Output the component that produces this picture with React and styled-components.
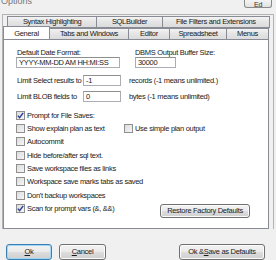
import styled, { createGlobalStyle } from "styled-components";

const GlobalStyle = createGlobalStyle`
  html, body {
    margin: 0;
    padding: 0;
    background: #f0f0f0;
  }
  body {
    font-family: "Liberation Sans", Arial, sans-serif;
    font-size: 7.5px;
    letter-spacing: -0.3px;
    color: #1a1a1a;
  }
`;

const Window = styled.div`
  width: 276px;
  height: 260px;
  overflow: hidden;
  display: flex;
  flex-direction: column;
  background: #f0f0f0;
`;

const TitleBar = styled.div`
  height: 14px;
  display: flex;
  align-items: flex-start;
  justify-content: space-between;
  padding: 0 4px 0 1px;
  box-sizing: border-box;
`;

const Title = styled.span`
  font-size: 9px;
  line-height: 9px;
  margin-top: -3px;
  letter-spacing: 0;
  color: #777;
`;

const CornerButton = styled.div`
  width: 26px;
  height: 8px;
  margin-top: -1px;
  border: 1px solid #8a8a8a;
  border-top: none;
  border-radius: 0 0 3px 3px;
  background: linear-gradient(#f6f6f6, #e2e2e2);
  display: flex;
  justify-content: center;
  align-items: flex-end;
  font-size: 7px;
  line-height: 5px;
  color: #333;
  overflow: hidden;
`;

const Frame = styled.div`
  margin: 0 2px;
  height: 223px;
  border: 1px solid #b4b4b4;
  border-bottom: none;
  box-sizing: border-box;
  padding: 1px 4px 0 0;
  display: flex;
  flex-direction: column;
`;

const TabRow = styled.div`
  display: flex;
  height: 12px;
  padding-left: ${(p) => p.$indent}px;
  position: relative;
  z-index: ${(p) => (p.$front ? 2 : 1)};
`;

const Tab = styled.div`
  width: ${(p) => p.$w}px;
  height: ${(p) => (p.$active ? 15 : 12)}px;
  margin-top: ${(p) => (p.$active ? -2 : 0)}px;
  box-sizing: border-box;
  border: 1px solid #898c95;
  border-bottom: ${(p) => (p.$active ? "none" : "1px solid #898c95")};
  margin-right: -1px;
  background: ${(p) =>
    p.$active ? "#fff" : "linear-gradient(#f3f3f3, #e4e4e4 50%, #dcdcdc)"};
  display: flex;
  align-items: ${(p) => (p.$active ? "flex-start" : "center")};
  padding-top: ${(p) => (p.$active ? 2 : 0)}px;
  justify-content: center;
  line-height: 9px;
  white-space: nowrap;
  position: relative;
  z-index: ${(p) => (p.$active ? 3 : 1)};
`;

const Page = styled.div`
  flex: 1;
  margin-top: -1px;
  border: 1px solid #898c95;
  background: #fff;
  padding: 8px 0 0 12px;
  box-sizing: border-box;
  position: relative;
  z-index: 2;
  max-height: 197px;
`;

const LabelRow = styled.div`
  display: flex;
  height: 9px;
  line-height: 9px;
`;

const Col = styled.div`
  width: ${(p) => p.$w}px;
  flex: none;
  padding-left: ${(p) => p.$pad || 0}px;
  box-sizing: border-box;
  white-space: nowrap;
`;

const InputRow = styled.div`
  display: flex;
  align-items: center;
  height: 11px;
  margin-top: ${(p) => p.$mt}px;
`;

const Field = styled.div`
  width: ${(p) => p.$w}px;
  height: 11px;
  flex: none;
  box-sizing: border-box;
  border: 1px solid #abadb3;
  border-top-color: #8e8f8f;
  background: #fff;
  padding-left: 2px;
  line-height: 9px;
  white-space: nowrap;
  overflow: hidden;
`;

const Label = styled.span`
  width: ${(p) => p.$w}px;
  flex: none;
  padding-left: 1px;
  white-space: nowrap;
`;

const Hint = styled.span`
  margin-left: 8px;
  white-space: nowrap;
`;

const Checks = styled.div`
  margin-top: 7px;
  display: flex;
  flex-direction: column;
`;

const CheckRow = styled.div`
  display: flex;
  align-items: flex-start;
  height: 13.35px;
`;

const CheckItem = styled.label`
  display: flex;
  align-items: center;
  width: ${(p) => (p.$w ? `${p.$w}px` : "auto")};
  flex: none;
  height: 13px;
  white-space: nowrap;
`;

const Box = styled.span`
  width: 9px;
  height: 9px;
  box-sizing: border-box;
  border: 1px solid #8f8f8f;
  background: linear-gradient(135deg, #dcdcdc, #f6f6f6);
  margin-right: 2px;
  display: flex;
  align-items: center;
  justify-content: center;
  flex: none;
`;

const Button = styled.div`
  width: ${(p) => p.$w}px;
  height: ${(p) => p.$h || 14}px;
  flex: none;
  box-sizing: border-box;
  border: 1px solid ${(p) => (p.$default ? "#3c7fb1" : "#707070")};
  box-shadow: ${(p) => (p.$default ? "inset 0 0 0 1px #9ed6f6" : "inset 0 0 0 1px #fbfbfb")};
  border-radius: 3px;
  background: linear-gradient(#f2f2f2, #ebebeb 48%, #dddddd 52%, #cfcfcf);
  display: flex;
  align-items: center;
  justify-content: center;
  white-space: nowrap;
  line-height: 10px;
`;

const RestoreButton = styled(Button)`
  margin-left: auto;
  margin-right: 18px;
  margin-top: 2px;
`;

const ButtonBar = styled.div`
  display: flex;
  padding: 15px 0 0 6px;
  gap: 7px;
`;

const Spacer = styled.div`
  flex: 1;
`;

const U = styled.span`
  text-decoration: underline;
`;

function Check({ checked, children, w }) {
  return (
    <CheckItem $w={w}>
      <Box>
        {checked && (
          <svg width="7" height="7" viewBox="0 0 7 7">
            <path d="M0.8 3.6 L2.6 5.6 L6.2 0.8" fill="none" stroke="#2a3d8f" strokeWidth="1.4" />
          </svg>
        )}
      </Box>
      {children}
    </CheckItem>
  );
}

const backTabs = [
  { name: "Syntax Highlighting", w: 91 },
  { name: "SQLBuilder", w: 67 },
  { name: "File Filters and Extensions", w: 109 },
];

const frontTabs = [
  { name: "General", w: 47, active: true },
  { name: "Tabs and Windows", w: 80 },
  { name: "Editor", w: 42 },
  { name: "Spreadsheet", w: 58 },
  { name: "Menus", w: 43 },
];

export default function App() {
  return (
    <>
      <GlobalStyle />
      <Window>
        <TitleBar>
          <Title>Options</Title>
          <CornerButton>Ed</CornerButton>
        </TitleBar>
        <Frame>
          <TabRow $indent={4}>
            {backTabs.map((t) => (
              <Tab key={t.name} $w={t.w}>
                {t.name}
              </Tab>
            ))}
          </TabRow>
          <TabRow $indent={0} $front>
            {frontTabs.map((t) => (
              <Tab key={t.name} $w={t.w} $active={t.active}>
                {t.name}
              </Tab>
            ))}
          </TabRow>
          <Page>
            <LabelRow>
              <Col $w={119} $pad={1}>Default Date Format:</Col>
              <Col $w={100}>DBMS Output Buffer Size:</Col>
            </LabelRow>
            <InputRow $mt={0}>
              <Field $w={104}>YYYY-MM-DD AM HH:MI:SS</Field>
              <Field $w={41} style={{ marginLeft: 15 }}>30000</Field>
            </InputRow>
            <InputRow $mt={7}>
              <Label $w={66}>Limit Select results to</Label>
              <Field $w={38}>-1</Field>
              <Hint>records (-1 means unlimited.)</Hint>
            </InputRow>
            <InputRow $mt={5}>
              <Label $w={66}>Limit BLOB fields to</Label>
              <Field $w={38}>0</Field>
              <Hint>bytes (-1 means unlimited)</Hint>
            </InputRow>
            <Checks>
              <CheckRow>
                <Check checked>Prompt for File Saves:</Check>
              </CheckRow>
              <CheckRow>
                <Check w={108}>Show explain plan as text</Check>
                <Check>Use simple plan output</Check>
              </CheckRow>
              <CheckRow>
                <Check>Autocommit</Check>
              </CheckRow>
              <CheckRow>
                <Check>Hide before/after sql text.</Check>
              </CheckRow>
              <CheckRow>
                <Check>Save workspace files as links</Check>
              </CheckRow>
              <CheckRow>
                <Check>Workspace save marks tabs as saved</Check>
              </CheckRow>
              <CheckRow>
                <Check>Don't backup workspaces</Check>
              </CheckRow>
              <CheckRow>
                <Check checked>Scan for prompt vars (&amp;, &amp;&amp;)</Check>
                <RestoreButton $w={90} $h={14}>Restore Factory Defaults</RestoreButton>
              </CheckRow>
            </Checks>
          </Page>
        </Frame>
        <ButtonBar>
          <Button $w={46} $h={16} $default>
            <U>O</U>k
          </Button>
          <Button $w={47} $h={16}>
            <U>C</U>ancel
          </Button>
          <Spacer />
          <Button $w={86} $h={16} style={{ marginRight: 11 }}>
            Ok &amp; <U>S</U>ave as Defaults
          </Button>
        </ButtonBar>
      </Window>
    </>
  );
}
